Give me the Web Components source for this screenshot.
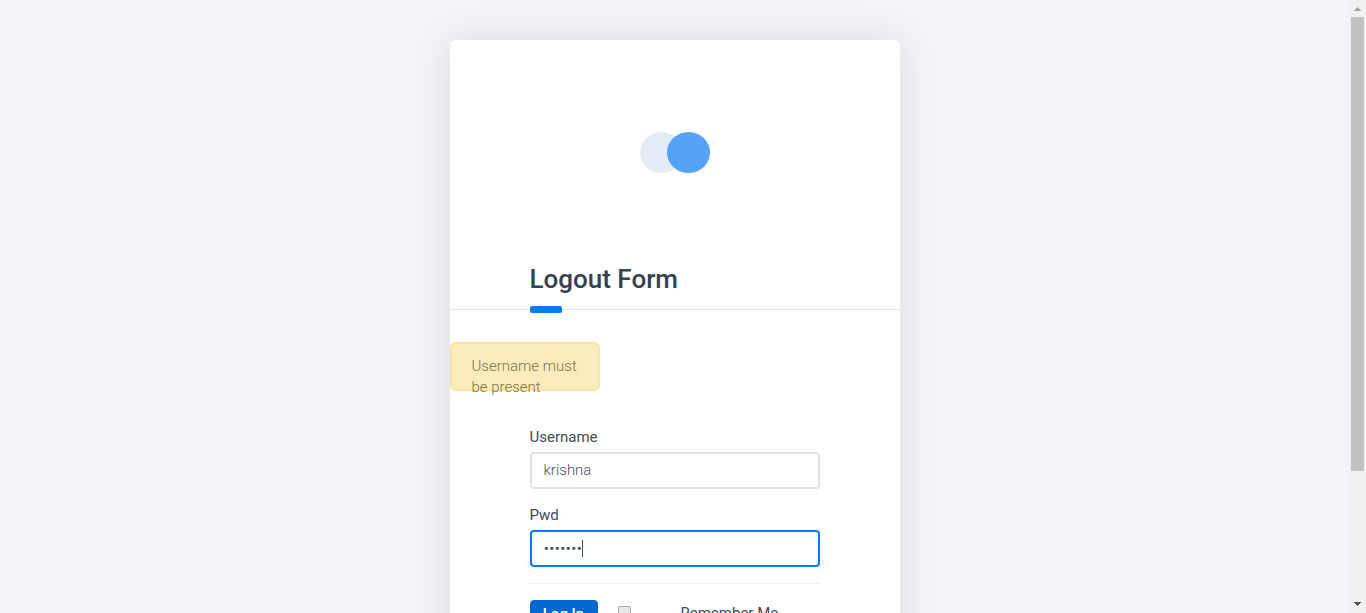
<!DOCTYPE html>
<html lang="en">
<head>
<meta charset="utf-8">
<title>Logout Form</title>
<style>
html, body { height: 100%; }
body {
  margin: 0;
  overflow: hidden;
  background: #f2f4f8;
  color: #3e4b5b;
  font: 300 15px/21px Roboto, "Open Sans", sans-serif;
}
</style>
</head>
<body>
<app-shell>
  <auth-card heading="Logout Form">
    <brand-logo slot="logo"></brand-logo>
    <flash-alert slot="alert">Username must be present</flash-alert>
    <text-field label="Username" type="text" value="krishna"></text-field>
    <text-field label="Pwd" type="password" value="krishna" active></text-field>
    <form-actions></form-actions>
  </auth-card>
</app-shell>
<script>
class BaseElement extends HTMLElement {
  connectedCallback() {
    if (this.shadowRoot) return;
    this.attachShadow({ mode: "open" }).innerHTML =
      "<style>*{box-sizing:border-box}" + this.styles() + "</style>" + this.markup();
  }
}

customElements.define("app-shell", class extends BaseElement {
  styles() {
    return `
      :host { display: grid; grid-template-columns: 1fr 17px; height: 100vh; overflow: hidden; }
      main { min-width: 0; overflow: hidden; padding: 40px 0; }
    `;
  }
  markup() { return `<main><slot></slot></main><scroll-rail></scroll-rail>`; }
});

customElements.define("scroll-rail", class extends BaseElement {
  styles() {
    return `
      :host { display: flex; flex-direction: column; height: 100vh; padding: 0 2px; box-sizing: border-box; background: #f1f1f1; }
      svg { display: block; flex: none; width: 13px; height: 17px; }
      .track { flex: 1; }
      .thumb { height: 78.4%; background: #c1c1c1; }
    `;
  }
  markup() {
    return `
      <svg viewBox="0 0 13 17" shape-rendering="crispEdges"><path d="M3 11h7v-1h-1v-1h-1v-1h-1v-1h-1v1h-1v1h-1v1h-1z" fill="#a3a3a3"/></svg>
      <div class="track"><div class="thumb"></div></div>
      <svg viewBox="0 0 13 17" shape-rendering="crispEdges"><path d="M3 6h7v1h-1v1h-1v1h-1v1h-1v-1h-1v-1h-1v-1h-1z" fill="#505050"/></svg>
    `;
  }
});

customElements.define("brand-logo", class extends BaseElement {
  styles() { return `:host { display: block; } svg { display: block; }`; }
  markup() {
    return `
      <svg width="70" height="41" viewBox="0 0 70 41" role="img" aria-label="Logo">
        <ellipse cx="21.5" cy="20.5" rx="21.5" ry="20.5" fill="#e4ebf4"/>
        <ellipse cx="48.5" cy="20.5" rx="21.5" ry="20.5" fill="#54a3f7"/>
      </svg>
    `;
  }
});

customElements.define("auth-card", class extends BaseElement {
  styles() {
    return `
      :host { display: block; max-width: 450px; margin: 0 auto; border-radius: 6px; background: #fff; box-shadow: 0 0 40px rgba(0, 0, 0, 0.1); }
      .logo { display: flex; justify-content: center; padding: 92px 20px 90px; }
      h1 { position: relative; margin: 0; padding: 0 80px 14px; border-bottom: 1px solid #e4e4e6; color: #334152; font-size: 26px; line-height: 32px; font-weight: 500; }
      h1::after { content: ""; position: absolute; left: 80px; bottom: -4px; width: 32px; height: 7px; border-radius: 2px; background: #047bf8; }
      .alert { padding-top: 32px; }
      form { padding: 36px 80px 40px; }
    `;
  }
  markup() {
    return `
      <div class="logo"><slot name="logo"></slot></div>
      <h1>${this.getAttribute("heading")}</h1>
      <div class="alert"><slot name="alert"></slot></div>
      <form><slot></slot></form>
    `;
  }
});

customElements.define("flash-alert", class extends BaseElement {
  styles() {
    return `
      :host { display: block; width: 150px; height: 49px; padding: 12px 20px; box-sizing: border-box; border: 2px solid #fbe4a0; border-radius: 6px; background: #fbecbd; color: #7f7048; }
    `;
  }
  markup() { return `<div role="alert"><slot></slot></div>`; }
});

customElements.define("text-field", class extends BaseElement {
  styles() {
    return `
      :host { display: block; margin-bottom: 16px; }
      label { display: block; margin-bottom: 4px; font-weight: 400; }
      .box { position: relative; }
      input { display: block; width: 100%; height: 37px; margin: 0; padding: 0 12px 2px; border: 2px solid #dde2ec; border-radius: 4px; outline: 0; background: #fff; color: #495057; font: inherit; caret-color: transparent; }
      input[type="password"] { font-size: 17px; }
      :host([active]) input { border-color: #047bf8; }
      .caret { position: absolute; left: 52px; top: 10px; width: 1px; height: 17px; background: #3e4b5b; }
    `;
  }
  markup() {
    return `
      <label for="field">${this.getAttribute("label")}</label>
      <div class="box">
        <input id="field" type="${this.getAttribute("type")}" value="${this.getAttribute("value")}" autocomplete="off">
        ${this.hasAttribute("active") ? '<span class="caret"></span>' : ""}
      </div>
    `;
  }
});

customElements.define("form-actions", class extends BaseElement {
  styles() {
    return `
      :host { display: flex; align-items: flex-start; padding-top: 16px; border-top: 1px solid #f0f0f2; }
      button { width: 68px; height: 32px; margin: 0; padding: 0 0 4px; border: 1px solid #0362c6; border-radius: 4px; background: #0368d2; color: #fff; font: 500 15px/24px Roboto, "Open Sans", sans-serif; }
      input { appearance: none; width: 13px; height: 13px; margin: 6px 50px 0 20px; border: 1px solid #a9a9a9; border-radius: 2px; background: linear-gradient(#ececec, #dcdcdc); }
      label { padding-top: 3px; font-weight: 400; }
    `;
  }
  markup() {
    return `
      <button type="button">Log In</button>
      <input id="remember" type="checkbox">
      <label for="remember">Remember Me</label>
    `;
  }
});
</script>
</body>
</html>
